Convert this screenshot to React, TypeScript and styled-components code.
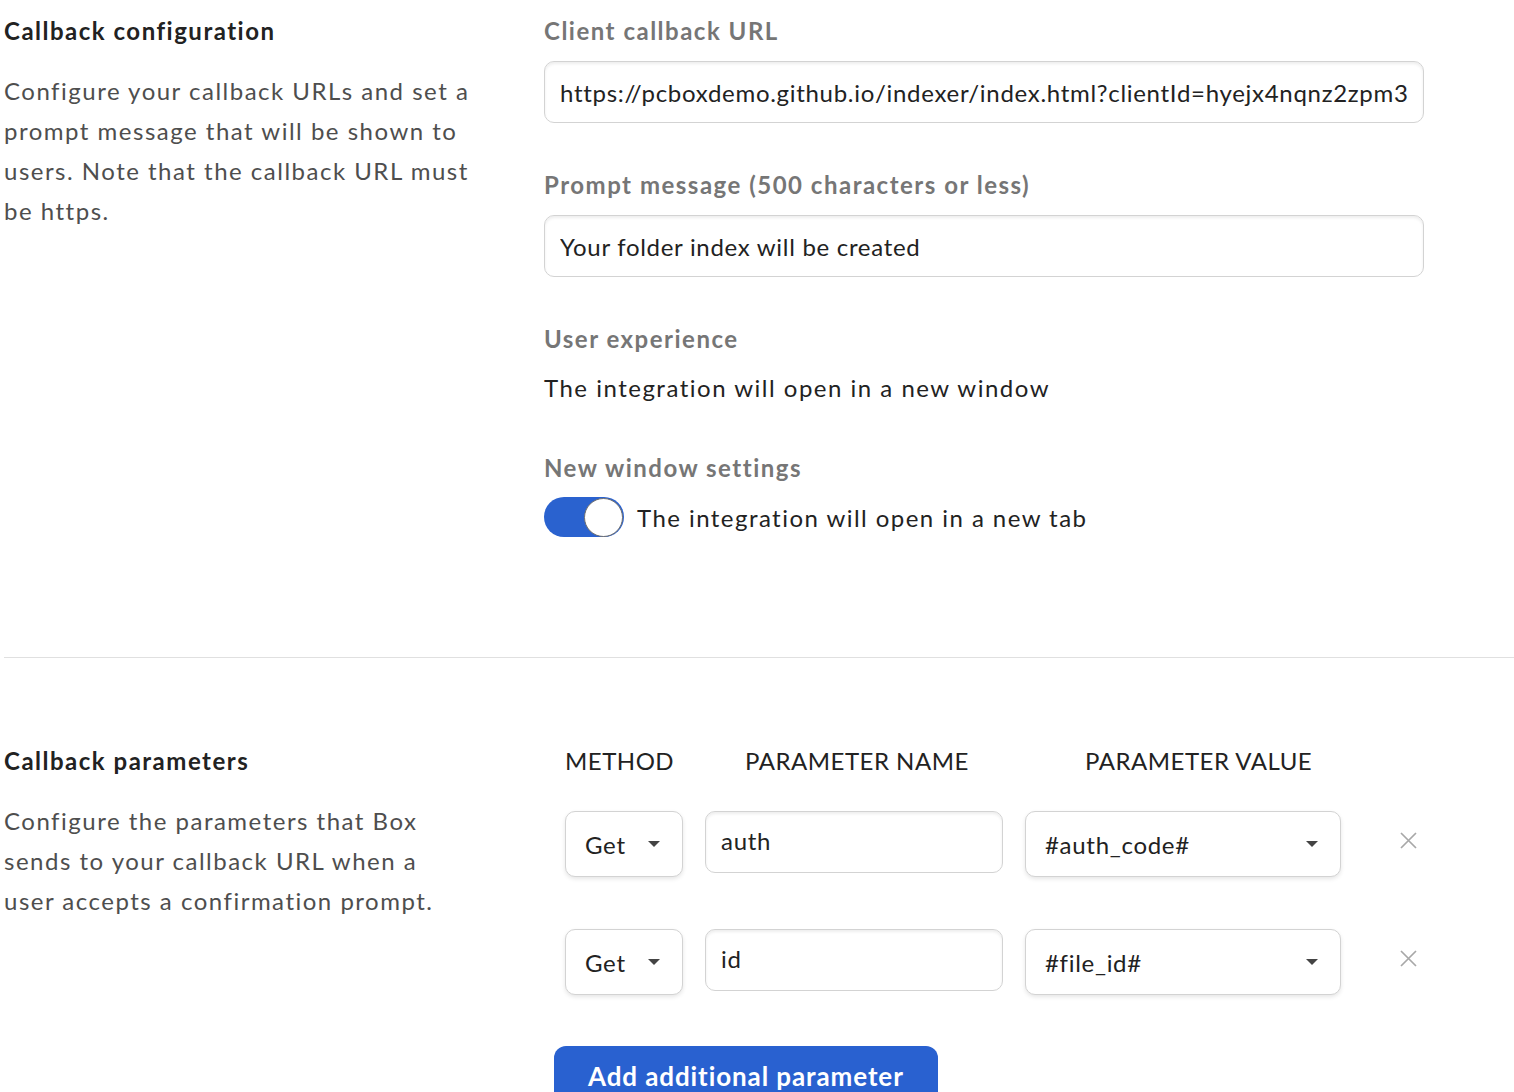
import React from "react";
import styled, { createGlobalStyle } from "styled-components";

const Global = createGlobalStyle`
  html, body { margin: 0; padding: 0; background: #fff; }
  body { font-family: Lato, "Noto Sans", "Liberation Sans", sans-serif; color: #222; }
  * { box-sizing: border-box; }
`;

const Page = styled.div`
  padding: 16px 0 0 4px;
  width: 1514px;
  overflow: hidden;
`;

const Section = styled.section`
  display: grid;
  grid-template-columns: 540px 880px;
`;

const SideCol = styled.div`
  display: flex;
  flex-direction: column;
`;

const SideTitle = styled.h2`
  margin: 0;
  font-size: 24px;
  line-height: 30px;
  font-weight: 700;
  color: #222;
  letter-spacing: 1.5px;
`;

const SideText = styled.p<{ $width: number }>`
  margin: 25px 0 0;
  width: ${(p) => p.$width}px;
  font-size: 24px;
  line-height: 40px;
  color: #4e4e4e;
  letter-spacing: 1.5px;
`;

const MainCol = styled.div`
  display: flex;
  flex-direction: column;
`;

const FieldLabel = styled.div<{ $top?: number }>`
  margin-top: ${(p) => p.$top ?? 0}px;
  font-size: 24px;
  line-height: 30px;
  font-weight: 700;
  color: #767676;
  letter-spacing: 1.5px;
`;

const TextInput = styled.div<{ $top?: number }>`
  margin-top: ${(p) => p.$top ?? 15}px;
  height: 62px;
  border: 1.5px solid #d3d3d3;
  border-radius: 10px;
  box-shadow: inset 0 2px 3px rgba(0, 0, 0, 0.07);
  padding: 0 15px;
  display: flex;
  align-items: center;
  font-size: 24px;
  letter-spacing: 0.7px;
  color: #222;
  background: #fff;
`;

const InputValue = styled.span`
  flex: 1;
  min-width: 0;
  white-space: nowrap;
  overflow: hidden;
`;

const Plain = styled.div<{ $top: number }>`
  margin-top: ${(p) => p.$top}px;
  font-size: 24px;
  line-height: 30px;
  color: #222;
  letter-spacing: 1.5px;
`;

const ToggleRow = styled.div`
  margin-top: 14px;
  display: flex;
  align-items: center;
  gap: 13px;
  font-size: 24px;
  color: #222;
  letter-spacing: 1.45px;
`;

const Track = styled.div`
  width: 80px;
  height: 40px;
  border-radius: 20px;
  background: #2a62cf;
  display: flex;
  align-items: center;
  justify-content: flex-end;
  padding: 0 1px;
`;

const Knob = styled.div`
  width: 39px;
  height: 39px;
  border-radius: 50%;
  background: #fff;
  border: 1.5px solid #6f6f6f;
`;

const Divider = styled.hr`
  margin: 120px 0 0;
  border: 0;
  border-top: 1px solid #e0e0e0;
  height: 0;
`;

const ParamSection = styled(Section)`
  margin-top: 88px;
`;

const ParamArea = styled.div`
  display: flex;
  flex-direction: column;
`;

const ParamGrid = styled.div`
  display: grid;
  grid-template-columns: 118px 298px 316px 76px;
  column-gap: 22px;
  row-gap: 52px;
  padding-left: 21px;
  align-items: start;
`;

const HeadCell = styled.div<{ $offset: number }>`
  margin-left: ${(p) => p.$offset}px;
  font-size: 24px;
  line-height: 30px;
  color: #222;
  text-transform: uppercase;
  letter-spacing: 0.5px;
  white-space: nowrap;
  margin-bottom: -17px;
`;

const SelectBox = styled.div`
  height: 66px;
  border: 1.5px solid #d3d3d3;
  border-radius: 10px;
  box-shadow: 0 2px 4px rgba(0, 0, 0, 0.1);
  padding: 0 22px 0 19px;
  display: flex;
  align-items: center;
  justify-content: space-between;
  font-size: 24px;
  letter-spacing: 0.7px;
  color: #222;
  background: #fff;
`;

const NameInput = styled(TextInput)`
  margin-top: 0;
  height: 62px;
  padding-bottom: 3px;
`;

const Caret = styled.span`
  width: 0;
  height: 0;
  border-left: 6px solid transparent;
  border-right: 6px solid transparent;
  border-top: 6px solid #444;
`;

const RemoveBtn = styled.button`
  justify-self: start;
  margin: 20px 0 0 36px;
  padding: 0;
  border: 0;
  background: none;
  width: 18px;
  height: 18px;
  display: flex;
  align-items: center;
  justify-content: center;
  cursor: pointer;
`;

const AddButton = styled.button`
  margin: 51px 0 0 10px;
  width: 384px;
  height: 64px;
  border: 0;
  border-radius: 12px;
  background: #2961d0;
  color: #fff;
  font-family: inherit;
  font-size: 26px;
  font-weight: 700;
  letter-spacing: 0.9px;
  text-align: left;
  padding: 0 0 4px 34px;
  display: flex;
  align-items: center;
`;

const XIcon = () => (
  <svg width="17" height="17" viewBox="0 0 17 17">
    <path d="M1 1 L16 16 M16 1 L1 16" stroke="#a8a8a8" strokeWidth="1.7" fill="none" />
  </svg>
);

const rows = [
  { method: "Get", name: "auth", value: "#auth_code#" },
  { method: "Get", name: "id", value: "#file_id#" },
];

export default function App() {
  return (
    <>
      <Global />
      <Page>
        <Section>
          <SideCol>
            <SideTitle>Callback configuration</SideTitle>
            <SideText $width={480}>
              Configure your callback URLs and set a prompt message that will be shown to users. Note that the callback
              URL must be https.
            </SideText>
          </SideCol>
          <MainCol>
            <FieldLabel>Client callback URL</FieldLabel>
            <TextInput>
              <InputValue>https://pcboxdemo.github.io/indexer/index.html?clientId=hyejx4nqnz2zpm3ybm</InputValue>
            </TextInput>
            <FieldLabel $top={47}>Prompt message (500 characters or less)</FieldLabel>
            <TextInput>
              <InputValue>Your folder index will be created</InputValue>
            </TextInput>
            <FieldLabel $top={47}>User experience</FieldLabel>
            <Plain $top={19}>The integration will open in a new window</Plain>
            <FieldLabel $top={50}>New window settings</FieldLabel>
            <ToggleRow>
              <Track>
                <Knob />
              </Track>
              The integration will open in a new tab
            </ToggleRow>
          </MainCol>
        </Section>
        <Divider />
        <ParamSection>
          <SideCol>
            <SideTitle>Callback parameters</SideTitle>
            <SideText $width={450}>
              Configure the parameters that Box sends to your callback URL when a user accepts a confirmation prompt.
            </SideText>
          </SideCol>
          <ParamArea>
            <ParamGrid>
              <HeadCell $offset={0}>Method</HeadCell>
              <HeadCell $offset={40}>Parameter name</HeadCell>
              <HeadCell $offset={60}>Parameter value</HeadCell>
              <div />
              {rows.map((r) => (
                <React.Fragment key={r.name}>
                  <SelectBox>
                    {r.method}
                    <Caret />
                  </SelectBox>
                  <NameInput>
                    <InputValue>{r.name}</InputValue>
                  </NameInput>
                  <SelectBox>
                    {r.value}
                    <Caret />
                  </SelectBox>
                  <RemoveBtn aria-label="Remove">
                    <XIcon />
                  </RemoveBtn>
                </React.Fragment>
              ))}
            </ParamGrid>
            <AddButton>Add additional parameter</AddButton>
          </ParamArea>
        </ParamSection>
      </Page>
    </>
  );
}
